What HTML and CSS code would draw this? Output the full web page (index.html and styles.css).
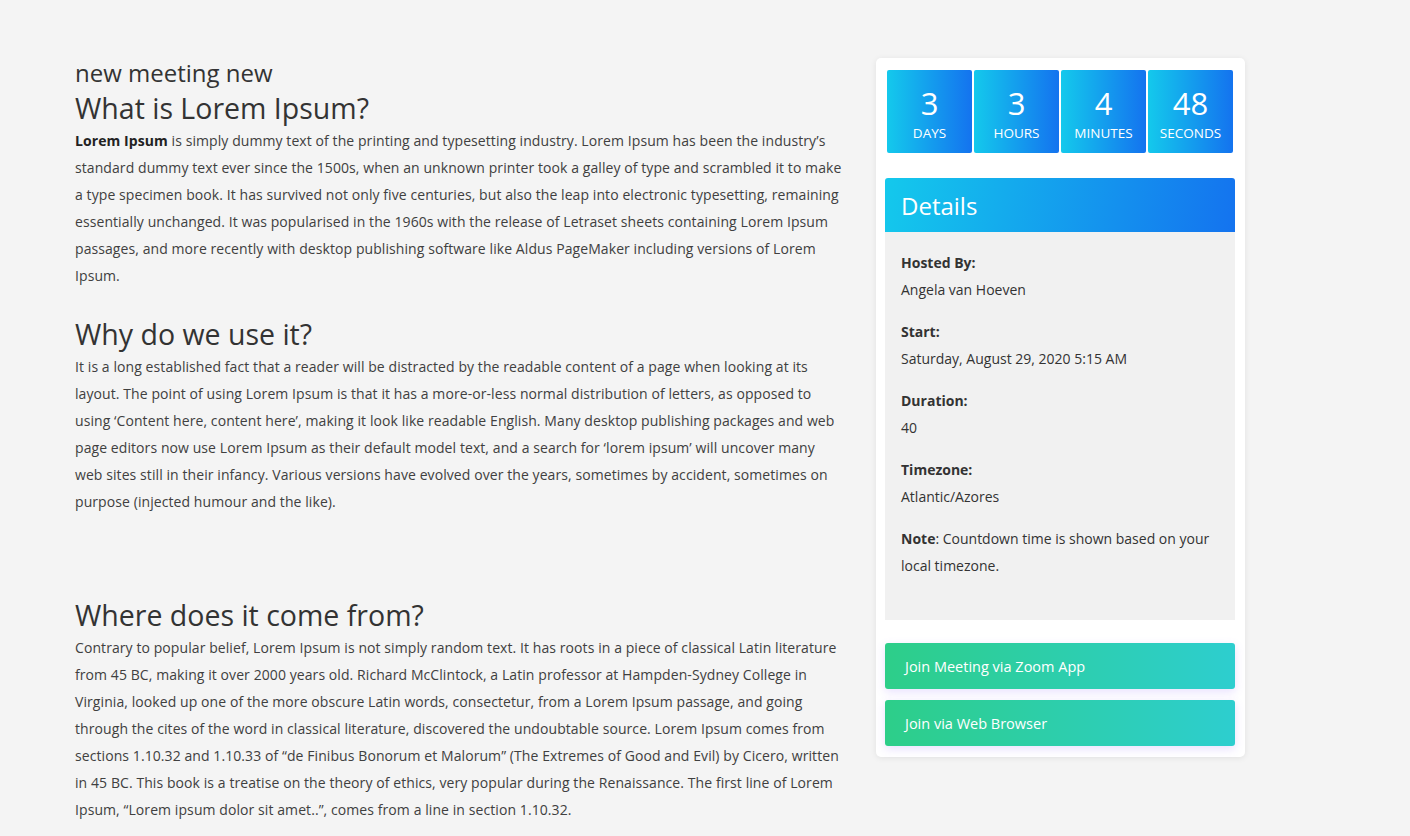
FILE: index.html
```html
<!DOCTYPE html>
<html lang="en">
<head>
<meta charset="utf-8">
<title>new meeting new</title>
<link rel="stylesheet" href="styles.css">
</head>
<body>
<div class="page">
  <main class="main">
    <h4 class="meeting-title">new meeting new</h4>
    <h2 class="section-title">What is Lorem Ipsum?</h2>
    <p class="text"><strong>Lorem Ipsum</strong> is simply dummy text of the printing and typesetting industry. Lorem Ipsum has been the industry’s standard dummy text ever since the 1500s, when an unknown printer took a galley of type and scrambled it to make a type specimen book. It has survived not only five centuries, but also the leap into electronic typesetting, remaining essentially unchanged. It was popularised in the 1960s with the release of Letraset sheets containing Lorem Ipsum passages, and more recently with desktop publishing software like Aldus PageMaker including versions of Lorem Ipsum.</p>
    <h2 class="section-title">Why do we use it?</h2>
    <p class="text">It is a long established fact that a reader will be distracted by the readable content of a page when looking at its layout. The point of using Lorem Ipsum is that it has a more-or-less normal distribution of letters, as opposed to using ‘Content here, content here’, making it look like readable English. Many desktop publishing packages and web page editors now use Lorem Ipsum as their default model text, and a search for ‘lorem ipsum’ will uncover many web sites still in their infancy. Various versions have evolved over the years, sometimes by accident, sometimes on purpose (injected humour and the like).</p>
    <div class="spacer"></div>
    <h2 class="section-title">Where does it come from?</h2>
    <p class="text">Contrary to popular belief, Lorem Ipsum is not simply random text. It has roots in a piece of classical Latin literature from 45 BC, making it over 2000 years old. Richard McClintock, a Latin professor at Hampden-Sydney College in Virginia, looked up one of the more obscure Latin words, consectetur, from a Lorem Ipsum passage, and going through the cites of the word in classical literature, discovered the undoubtable source. Lorem Ipsum comes from sections 1.10.32 and 1.10.33 of “de Finibus Bonorum et Malorum” (The Extremes of Good and Evil) by Cicero, written in 45 BC. This book is a treatise on the theory of ethics, very popular during the Renaissance. The first line of Lorem Ipsum, “Lorem ipsum dolor sit amet..”, comes from a line in section 1.10.32.</p>
  </main>

  <aside class="card">
    <div class="countdown">
      <div class="count-box"><span class="count-num">3</span><span class="count-label">Days</span></div>
      <div class="count-box"><span class="count-num">3</span><span class="count-label">Hours</span></div>
      <div class="count-box"><span class="count-num">4</span><span class="count-label">Minutes</span></div>
      <div class="count-box"><span class="count-num">48</span><span class="count-label">Seconds</span></div>
    </div>

    <div class="details">
      <div class="details-head">Details</div>
      <div class="details-body">
        <div class="detail">
          <div class="detail-label">Hosted By:</div>
          <div class="detail-value">Angela van Hoeven</div>
        </div>
        <div class="detail">
          <div class="detail-label">Start:</div>
          <div class="detail-value">Saturday, August 29, 2020 5:15 AM</div>
        </div>
        <div class="detail">
          <div class="detail-label">Duration:</div>
          <div class="detail-value">40</div>
        </div>
        <div class="detail">
          <div class="detail-label">Timezone:</div>
          <div class="detail-value">Atlantic/Azores</div>
        </div>
        <p class="note"><strong>Note</strong>: Countdown time is shown based on your local timezone.</p>
      </div>
    </div>

    <div class="actions">
      <a class="btn" href="#">Join Meeting via Zoom App</a>
      <a class="btn" href="#">Join via Web Browser</a>
    </div>
  </aside>
</div>
</body>
</html>
```

FILE: styles.css
```css
* {
  box-sizing: border-box;
}

html, body {
  margin: 0;
  padding: 0;
}

body {
  background: #f4f4f4;
  color: #404040;
  font-family: "Open Sans", "Noto Sans", "Liberation Sans", sans-serif;
  font-size: 14px;
}

.page {
  display: flex;
  align-items: flex-start;
  padding: 58px 0 0 75px;
  gap: 31px;
}

.main {
  width: 770px;
  flex: none;
}

.meeting-title {
  margin: 0;
  font-size: 24px;
  font-weight: 400;
  line-height: 29px;
  color: #333;
}

.section-title {
  margin: 0;
  font-size: 28.5px;
  font-weight: 400;
  line-height: 40px;
  padding-top: 1px;
  margin-bottom: -1px;
  color: #333;
}

.text {
  margin: 0 0 24px;
  line-height: 27px;
  letter-spacing: 0.08px;
}

.text strong {
  color: #222;
}

.spacer {
  height: 55px;
}

.card {
  width: 369px;
  flex: none;
  background: #fff;
  border-radius: 5px;
  box-shadow: 0 1px 6px rgba(0, 0, 0, 0.08);
  padding: 12px 10px 11px 9px;
}

.countdown {
  display: flex;
  gap: 2px;
  padding: 0 2px;
}

.count-box {
  width: 85px;
  height: 83px;
  border-radius: 2px;
  background: linear-gradient(90deg, #14c9ec 0%, #1473ef 100%);
  color: #fff;
  display: flex;
  flex-direction: column;
  align-items: center;
  padding-top: 13px;
}

.count-num {
  font-size: 31px;
  line-height: 40px;
}

.count-label {
  font-size: 13.5px;
  line-height: 20px;
  text-transform: uppercase;
}

.details {
  margin-top: 25px;
}

.details-head {
  height: 54px;
  padding: 0 16px;
  display: flex;
  align-items: center;
  color: #fff;
  font-size: 24px;
  border-radius: 3px 3px 0 0;
  background: linear-gradient(100deg, #14c9ec 0%, #1473ef 100%);
}

.details-body {
  background: #f1f1f1;
  padding: 17px 16px 41px;
  color: #333;
}

.detail {
  margin-bottom: 15px;
}

.detail-label {
  font-weight: 700;
  line-height: 27px;
}

.detail-value {
  line-height: 27px;
}

.note {
  margin: 0;
  line-height: 27px;
}

.actions {
  margin-top: 23px;
  display: flex;
  flex-direction: column;
  gap: 11px;
}

.btn {
  display: flex;
  align-items: center;
  height: 46px;
  padding: 0 20px;
  border-radius: 3px;
  color: #fff;
  text-decoration: none;
  font-size: 14.5px;
  background: linear-gradient(90deg, #2dce89 0%, #2dcecf 100%);
  box-shadow: 0 3px 10px rgba(140, 100, 255, 0.2);
}
```
